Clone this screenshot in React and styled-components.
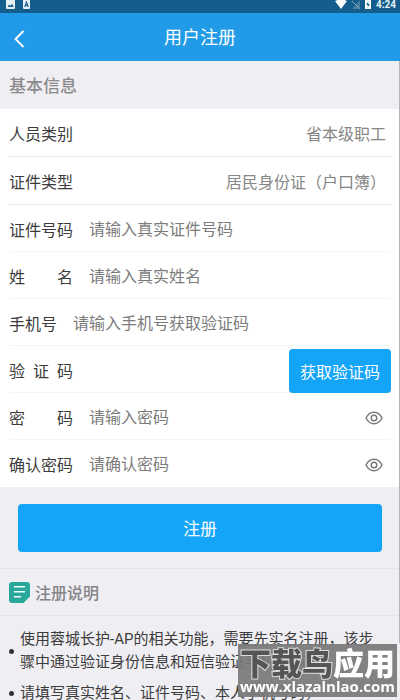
import React, { useState } from "react";
import styled, { createGlobalStyle } from "styled-components";

const GlobalStyle = createGlobalStyle`
  *, *::before, *::after { box-sizing: border-box; }
  html { scrollbar-width: none; }
  body {
    margin: 0;
    background: #efeef3;
    color: #3c3c3c;
    font-family: Roboto, "Noto Sans CJK SC", sans-serif;
    font-size: 16px;
  }
  button, input, select { font: inherit; }
`;

const Page = styled.div`
  min-height: 100vh;
`;

const StatusBar = styled.div`
  display: flex;
  align-items: center;
  gap: 8px;
  height: 13px;
  padding: 0 4px 4px 6px;
  background: #135e8c;
  color: #e8f1f6;
  font: bold 10px/9px Roboto, sans-serif;
  svg { display: block; flex: none; }
`;

const StatusRight = styled.div`
  display: flex;
  align-items: center;
  gap: 5px;
  margin-left: auto;
`;

const Header = styled.header`
  display: grid;
  grid-template-columns: 40px 1fr 40px;
  align-items: center;
  height: 48px;
  background: #219be8;
  color: #fff;
`;

const BackButton = styled.button`
  display: flex;
  align-items: center;
  height: 48px;
  padding: 4px 0 0 14px;
  border: 0;
  background: none;
  color: inherit;
`;

const Title = styled.h1`
  margin: 0;
  padding-top: 2px;
  font-size: 18px;
  font-weight: 400;
  line-height: 24px;
  text-align: center;
`;

const SectionTitle = styled.h2`
  margin: 0;
  padding: 2px 9px 0;
  color: #8b8b8d;
  font-size: 17px;
  font-weight: 500;
  line-height: 46px;
`;

const Fields = styled.div`
  padding: 0 9px;
  background: #fff;
`;

const Row = styled.div`
  display: flex;
  align-items: center;
  height: ${(p) => (p.$tall ? 48 : 47)}px;
  padding-top: 3px;
  border-bottom: 1px solid ${(p) => (p.$tall ? "#ececec" : "#f5f5f5")};
  &:last-child { border-bottom-color: transparent; }
`;

const Label = styled.label`
  flex: none;
  width: ${(p) => (p.$natural ? "auto" : "64px")};
  margin-right: 16px;
  padding-top: 2px;
  line-height: 24px;
  text-align-last: justify;
`;

const Select = styled.select`
  flex: 1;
  min-width: 0;
  padding: 2px 5px 0 0;
  border: 0;
  background: none;
  appearance: none;
  color: #868686;
  line-height: 24px;
  text-align: right;
  text-align-last: right;
`;

const TextInput = styled.input`
  flex: 1;
  min-width: 0;
  height: 32px;
  padding: 0;
  border: 0;
  outline: 0;
  background: none;
  color: #3c3c3c;
  &::placeholder { color: #7c7c7c; opacity: 1; }
`;

const EyeButton = styled.button`
  display: flex;
  padding: 8px;
  border: 0;
  background: none;
  color: #777;
`;

const CodeButton = styled.button`
  flex: none;
  width: 102px;
  height: 44px;
  padding: 0;
  border: 0;
  border-radius: 4px;
  background: #14a4f8;
  color: #fff;
`;

const SubmitArea = styled.div`
  padding: 17px 18px 16px;
`;

const SubmitButton = styled.button`
  display: block;
  width: 100%;
  height: 48px;
  padding: 0 0 2px;
  border: 0;
  border-radius: 4px;
  background: #14a4f8;
  color: #fff;
  font-size: 17px;
`;

const NotesHeader = styled.div`
  display: flex;
  align-items: center;
  gap: 5px;
  height: 48px;
  padding: 0 9px;
  border: solid #e5e4e9;
  border-width: 1px 0;
  h2 {
    margin: 0;
    padding-top: 3px;
    color: #858587;
    font-size: 16px;
    font-weight: 500;
    line-height: 24px;
  }
`;

const NotesList = styled.ul`
  margin: 0;
  padding: 12px 20px 0 9px;
  list-style: none;
`;

const Note = styled.li`
  display: flex;
  align-items: center;
  gap: 6px;
  margin-bottom: 8px;
  font-size: 15px;
  line-height: 23px;
  &::before {
    content: "";
    flex: none;
    width: 5px;
    height: 5px;
    border-radius: 50%;
    background: #333;
  }
`;

const NotesClip = styled.section`
  overflow: hidden;
`;

const ScrollMark = styled.div`
  position: fixed;
  top: 61px;
  right: 0;
  bottom: 57px;
  width: 1px;
  background: #b4b4b6;
`;

const Watermark = styled.div`
  position: fixed;
  right: 3px;
  bottom: 3px;
  width: 159px;
  height: 53px;
  padding-top: 2px;
  background: rgba(122, 122, 122, 0.93);
  color: #fff;
  text-align: center;
  white-space: nowrap;
`;

const WatermarkName = styled.div`
  font: 900 31px/32px "Noto Sans CJK SC", sans-serif;
  span {
    color: #555;
    -webkit-text-stroke: 2px #dcdcdc;
    paint-order: stroke fill;
  }
`;

const WatermarkUrl = styled.div`
  font: bold 15px/16px "Open Sans", sans-serif;
`;

function EyeIcon() {
  return (
    <svg width="18" height="14" viewBox="0 0 18 14" fill="none" stroke="currentColor" strokeWidth="1.4" aria-hidden="true">
      <path d="M1 7C3 3 6 1.3 9 1.3S15 3 17 7C15 11 12 12.7 9 12.7S3 11 1 7Z" />
      <circle cx="9" cy="7" r="2.8" />
    </svg>
  );
}

function PasswordRow({ id, label, placeholder }) {
  const [shown, setShown] = useState(false);
  return (
    <Row>
      <Label htmlFor={id}>{label}</Label>
      <TextInput id={id} type={shown ? "text" : "password"} placeholder={placeholder} />
      <EyeButton type="button" aria-label="显示密码" onClick={() => setShown(!shown)}>
        <EyeIcon />
      </EyeButton>
    </Row>
  );
}

export default function App() {
  return (
    <Page>
      <GlobalStyle />
      <StatusBar>
        <svg width="9" height="9" viewBox="0 0 9 9" aria-hidden="true">
          <path d="M0 0H9V8Q9 9 8 9H1Q0 9 0 8Z" fill="#e8f1f6" />
          <path d="M1.5 7 3 4.6 4.3 6 6 3.8 7.8 7Z" fill="#135e8c" />
        </svg>
        <svg width="7" height="9" viewBox="0 0 7 9" aria-hidden="true">
          <path d="M0 0H7V8Q7 9 6 9H1Q0 9 0 8Z" fill="#e8f1f6" />
          <path d="M1.7 7 3.5 2 5.3 7M2.3 5.4H4.7" fill="none" stroke="#135e8c" strokeWidth="1.1" />
        </svg>
        <StatusRight>
          <svg width="12" height="9" viewBox="0 0 12 9" aria-hidden="true">
            <path d="M0 1Q6-2 12 1L6 9Z" fill="#fff" />
          </svg>
          <svg width="8" height="9" viewBox="0 0 8 9" aria-hidden="true">
            <path d="M8 0V9H0Z" fill="#477f9e" />
            <path d="M0 1 8 9" stroke="#7fa6bc" />
          </svg>
          <svg width="6" height="9" viewBox="0 0 6 9" aria-hidden="true">
            <path d="M0 0H6V9H0Z" fill="#fff" />
            <path d="M3.5 1 1.3 5H3L2.5 8 4.8 4H3Z" fill="#135e8c" />
          </svg>
          <span>4:24</span>
        </StatusRight>
      </StatusBar>
      <Header>
        <BackButton type="button" aria-label="返回">
          <svg width="11" height="18" viewBox="0 0 11 18" fill="none" stroke="currentColor" strokeWidth="1.8" aria-hidden="true">
            <path d="M9.5 1 1.5 9 9.5 17" />
          </svg>
        </BackButton>
        <Title>用户注册</Title>
      </Header>
      <form onSubmit={(e) => e.preventDefault()}>
        <SectionTitle>基本信息</SectionTitle>
        <Fields>
          <Row $tall>
            <Label htmlFor="category">人员类别</Label>
            <Select id="category"><option>省本级职工</option></Select>
          </Row>
          <Row $tall>
            <Label htmlFor="idType">证件类型</Label>
            <Select id="idType"><option>居民身份证（户口簿）</option></Select>
          </Row>
          <Row>
            <Label htmlFor="idNumber">证件号码</Label>
            <TextInput id="idNumber" placeholder="请输入真实证件号码" />
          </Row>
          <Row>
            <Label htmlFor="name">姓名</Label>
            <TextInput id="name" placeholder="请输入真实姓名" />
          </Row>
          <Row>
            <Label htmlFor="phone" $natural>手机号</Label>
            <TextInput id="phone" type="tel" placeholder="请输入手机号获取验证码" />
          </Row>
          <Row>
            <Label htmlFor="code">验证码</Label>
            <TextInput id="code" />
            <CodeButton type="button">获取验证码</CodeButton>
          </Row>
          <PasswordRow id="password" label="密码" placeholder="请输入密码" />
          <PasswordRow id="confirm" label="确认密码" placeholder="请确认密码" />
        </Fields>
        <SubmitArea>
          <SubmitButton type="submit">注册</SubmitButton>
        </SubmitArea>
      </form>
      <NotesClip>
        <NotesHeader>
          <svg width="21" height="21" viewBox="0 0 21 21" aria-hidden="true">
            <path d="M3 0H18Q21 0 21 3V14.5L14.5 21H3Q0 21 0 18V3Q0 0 3 0Z" fill="#2aa79b" />
            <path d="M5.5 4.7H15.5M5.5 9.7H15.5M5.5 14.7H11.5" stroke="#f1fffc" strokeWidth="1.6" strokeLinecap="round" />
          </svg>
          <h2>注册说明</h2>
        </NotesHeader>
        <NotesList>
          <Note>使用蓉城长护-AP的相关功能，需要先实名注册，该步骤中通过验证身份信息和短信验证手机号码。</Note>
          <Note>请填写真实姓名、证件号码、本人手机号码，</Note>
        </NotesList>
      </NotesClip>
      <ScrollMark />
      <Watermark>
        <WatermarkName><span>下载鸟</span>应用</WatermarkName>
        <WatermarkUrl>www.xlazalnlao.com</WatermarkUrl>
      </Watermark>
    </Page>
  );
}
